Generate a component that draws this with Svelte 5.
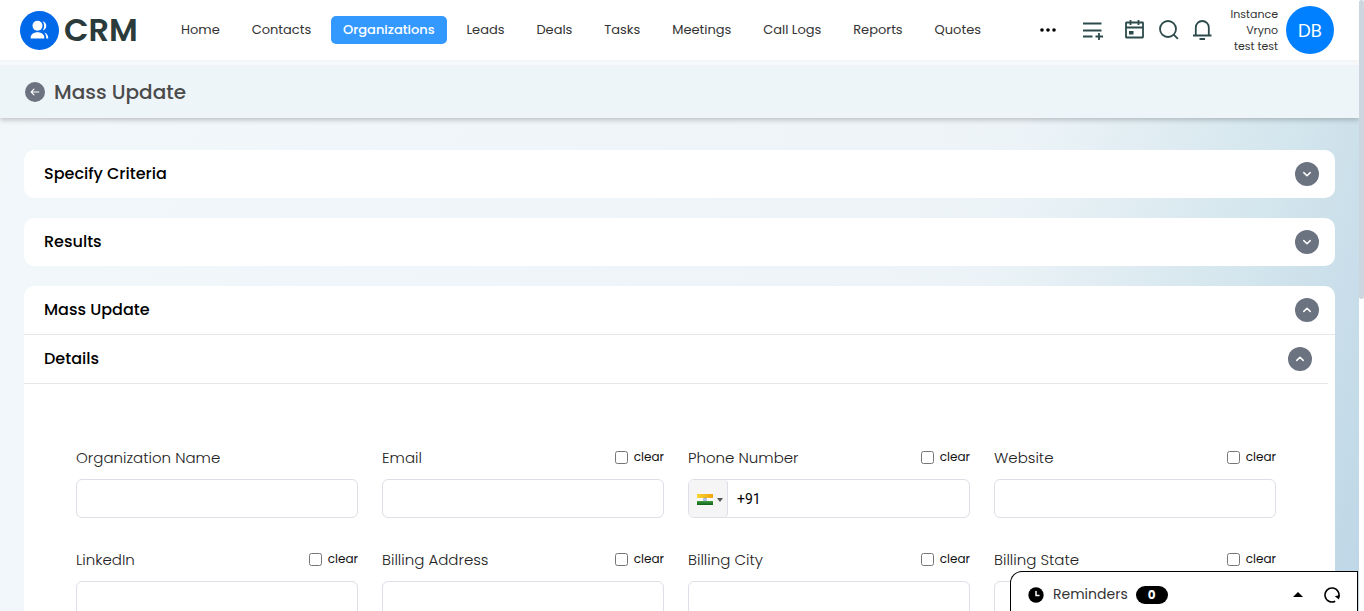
<script>
  const navItems = ['Home', 'Contacts', 'Organizations', 'Leads', 'Deals', 'Tasks', 'Meetings', 'Call Logs', 'Reports', 'Quotes'];
  const fields = [
    { id: 'name', label: 'Organization Name', clear: false },
    { id: 'email', label: 'Email', clear: true },
    { id: 'phone', label: 'Phone Number', clear: true, phone: true },
    { id: 'website', label: 'Website', clear: true },
    { id: 'linkedin', label: 'LinkedIn', clear: true },
    { id: 'billing-address', label: 'Billing Address', clear: true },
    { id: 'billing-city', label: 'Billing City', clear: true },
    { id: 'billing-state', label: 'Billing State', clear: true }
  ];
  let phone = $state('+91');
</script>

{#snippet chevron(up)}
  <svg width="12" height="12" viewBox="0 0 12 12" fill="none" stroke="#fff" stroke-width="1.5" stroke-linecap="round" stroke-linejoin="round" aria-hidden="true">
    {#if up}<path d="M2.8 7.4 6 4.3l3.2 3.1" />{:else}<path d="M2.8 4.6 6 7.7l3.2-3.1" />{/if}
  </svg>
{/snippet}

<div class="shell">
  <div class="page">
    <div class="top">
      <header class="topbar">
        <a class="brand" href="#home">
          <svg width="39" height="39" viewBox="0 0 39 39" aria-hidden="true">
            <circle cx="19.5" cy="19.5" r="19.5" fill="#0069ea" />
            <circle cx="17.5" cy="14.8" r="5" fill="#fff" />
            <path d="M10.7 27.6v-1.4c0-2.8 3-5 6.8-5s6.8 2.2 6.8 5v1.4z" fill="#fff" />
            <path d="M22.8 10.2a4.8 4.8 0 0 1 0 9.2c1.8-2.7 1.8-6.5 0-9.2zM24.3 21.6c2.3.5 3.9 2.8 4 6h-2c0-2.5-.6-4.5-2-6z" fill="#fff" />
          </svg>
          <span>CRM</span>
        </a>
        <nav>
          {#each navItems as item}
            <a href={'#' + item.toLowerCase().replace(' ', '-')} class:active={item === 'Organizations'}>{item}</a>
          {/each}
        </nav>
        <button class="plain more" aria-label="More">
          <svg width="16" height="4" viewBox="0 0 16 4" fill="#000"><circle cx="2" cy="2" r="1.8" /><circle cx="8" cy="2" r="1.8" /><circle cx="14" cy="2" r="1.8" /></svg>
        </button>
        <div class="tools">
          <button class="plain add" aria-label="Quick add">
            <svg width="20" height="20" viewBox="0 0 20 20" fill="none" stroke="#2c4a4a" stroke-width="1.8"><path d="M0 3.5h18.500M0 10.500h18.500M0 16.500h9.500M16 13v7M12.500 16.500h7.500" /></svg>
          </button>
          <button class="plain" aria-label="Calendar">
            <svg width="20" height="20" viewBox="0 0 20 20" fill="none" stroke="#2c4a4a" stroke-width="1.8"><rect x="1" y="2.500" width="17" height="15" rx=".5" /><path d="M1 7.500h17M5.500 0v5M13.500 0v5" /><rect x="4.500" y="11.500" width="3.500" height="2.500" fill="#2c4a4a" stroke-width="1" /></svg>
          </button>
          <button class="plain" aria-label="Search">
            <svg width="20" height="20" viewBox="0 0 20 20" fill="none" stroke="#2c4a4a" stroke-width="1.8"><circle cx="9" cy="9" r="8" /><path d="m14.700 14.700 4.200 4.200" /></svg>
          </button>
          <button class="plain" aria-label="Notifications">
            <svg width="20" height="20" viewBox="0 0 20 20" fill="none" stroke="#2c4a4a" stroke-width="1.8"><path d="M0 15.500h18.500M2.800 15.500V7.500a6.500 6.500 0 0 1 13 0v8M6.500 19h5.500" /></svg>
          </button>
        </div>
        <div class="who"><span>Instance</span><span>Vryno</span><span>test test</span></div>
        <button class="avatar">DB</button>
      </header>

      <div class="titlebar">
        <button class="round small" aria-label="Back">
          <svg width="12" height="12" viewBox="0 0 12 12" fill="none" stroke="#fff" stroke-width="1.1" stroke-linecap="round" stroke-linejoin="round"><path d="M9.800 6H2.300M5 3.200 2.200 6 5 8.800" /></svg>
        </button>
        <h1>Mass Update</h1>
      </div>
    </div>

    <main>
      <section class="card">
        <div class="head"><h2>Specify Criteria</h2><button class="round" aria-label="Expand Specify Criteria">{@render chevron(false)}</button></div>
      </section>
      <section class="card">
        <div class="head"><h2>Results</h2><button class="round" aria-label="Expand Results">{@render chevron(false)}</button></div>
      </section>
      <section class="card">
        <div class="head ruled"><h2>Mass Update</h2><button class="round" aria-label="Collapse Mass Update">{@render chevron(true)}</button></div>
        <div class="details">
          <div class="head ruled"><h2>Details</h2><button class="round" aria-label="Collapse Details">{@render chevron(true)}</button></div>
          <form>
            {#each fields as field}
              <div class="field">
                <div class="caption">
                  <label for={field.id}>{field.label}</label>
                  {#if field.clear}
                    <label class="clear"><input type="checkbox" />clear</label>
                  {/if}
                </div>
                {#if field.phone}
                  <div class="box phone">
                    <button type="button" class="country" aria-label="Country: India">
                      <svg width="16" height="11" viewBox="0 0 16 11" aria-hidden="true">
                        <defs>
                          <linearGradient id="saffron"><stop stop-color="#f7d531" /><stop offset="1" stop-color="#f2a50c" /></linearGradient>
                          <linearGradient id="green" x2="0" y2="1"><stop stop-color="#3f9a3c" /><stop offset="1" stop-color="#10611a" /></linearGradient>
                        </defs>
                        <rect width="16" height="11" fill="#fafafa" />
                        <rect width="16" height="4" fill="url(#saffron)" />
                        <rect y="7" width="16" height="4" fill="url(#green)" />
                        <circle cx="8" cy="5.5" r="1.5" fill="#c5d3eb" stroke="#7d93bd" stroke-width=".8" />
                      </svg>
                      <svg width="6" height="4" viewBox="0 0 6 4" aria-hidden="true"><path d="M0 0h6L3 4z" fill="#555" /></svg>
                    </button>
                    <input id={field.id} type="tel" bind:value={phone} />
                  </div>
                {:else}
                  <input class="box" id={field.id} type="text" />
                {/if}
              </div>
            {/each}
          </form>
        </div>
      </section>
    </main>
  </div>
  <div class="rail" aria-hidden="true"><div class="thumb"></div></div>

  <aside class="reminders">
    <svg width="16" height="16" viewBox="0 0 16 16" aria-hidden="true"><circle cx="8" cy="8" r="7.7" /><path d="M8 4v4.500h3.500" fill="none" stroke="#fff" stroke-width="1.5" /></svg>
    <span>Reminders</span>
    <span class="count">0</span>
    <button class="plain up" aria-label="Open reminders"><svg width="10" height="5" viewBox="0 0 10 5"><path d="M0 5 5 0l5 5z" /></svg></button>
    <button class="plain" aria-label="Refresh reminders">
      <svg width="16" height="16" viewBox="0 0 16 16" fill="none" stroke="#000" stroke-width="1.6"><path d="M11.200 14.200A7 7 0 1 1 14.300 11" /><path d="m10.800 9.300 5-1.200-.8 4.400z" fill="#000" stroke="none" /></svg>
    </button>
  </aside>
</div>

<style>
  :global(body) { margin: 0; }
  .shell, .shell * { box-sizing: border-box; }
  .shell {
    display: flex;
    height: 100vh;
    overflow: hidden;
    font-family: Poppins, Inter, "Open Sans", sans-serif;
    color: #000;
    background: #fff;
  }
  button, input { font: inherit; color: inherit; }
  button { padding: 0; border: 0; cursor: pointer; }
  svg { display: block; flex: none; }
  a { color: inherit; text-decoration: none; }
  h1, h2 { margin: 0; }
  .page {
    flex: 1;
    min-width: 0;
    overflow-y: auto;
    scrollbar-width: none;
    background: linear-gradient(108deg, #f2f7fa 0%, #edf4f8 68%, #d3e5ed 86%, #bdd6e6 100%);
  }
  .rail { flex: none; width: 5px; }
  .thumb { height: 49%; border-radius: 4px; background: #cdd6de; }

  .top { background: #f7f9fb; }
  .topbar {
    display: flex;
    align-items: center;
    height: 60px;
    padding: 0 25px 0 20px;
    background: #fff;
    box-shadow: 0 1px 3px rgba(0, 0, 0, 0.04);
  }
  .brand { display: flex; align-items: center; gap: 5px; width: 149px; font-size: 32px; font-weight: 600; color: #2b3b3b; }
  nav { flex: 1; display: flex; justify-content: space-between; font-size: 13px; line-height: 28px; color: #333; }
  nav a { padding: 0 12px; border-radius: 5px; white-space: nowrap; }
  nav .active { background: #3399ff; color: #fff; font-weight: 500; }
  .plain { background: none; }
  .more { margin: 0 27px 0 47px; }
  .tools { display: flex; gap: 14px; }
  .add { margin-right: 8px; }
  .who { display: flex; flex-direction: column; align-items: flex-end; width: 65px; margin-right: 8px; font-size: 11px; line-height: 16px; color: #333; }
  .avatar { width: 48px; height: 48px; border-radius: 50%; background: #007fff; color: #fff; font-size: 18px; }

  .titlebar {
    display: flex;
    align-items: center;
    gap: 9px;
    height: 53px;
    margin-top: 5px;
    padding: 0 25px;
    background: #eef5f9;
    box-shadow: 0 2px 5px rgba(0, 0, 0, 0.22);
    clip-path: inset(0 0 -8px 0);
  }
  .titlebar h1 { font-size: 20px; font-weight: 500; color: #4b4b4b; }
  .round { display: grid; place-items: center; width: 24px; height: 24px; border-radius: 50%; background: #6b7280; }
  .small { width: 20px; height: 20px; }

  main { display: flex; flex-direction: column; gap: 20px; padding: 32px 24px; }
  .card { border-radius: 10px; background: #fff; }
  .head { display: flex; align-items: center; justify-content: space-between; height: 48px; padding: 0 16px 0 20px; }
  .head h2 { font-size: 16px; font-weight: 500; line-height: 24px; }
  .ruled { height: 49px; border-bottom: 1px solid #e5e7eb; }
  .details { margin-right: 7px; }

  form { display: grid; grid-template-columns: repeat(4, minmax(0, 1fr)); gap: 24px; padding: 62px 52px 40px; }
  .caption { display: flex; justify-content: space-between; height: 33px; font-size: 15px; font-weight: 300; line-height: 24px; color: #222; }
  .clear { display: flex; align-items: center; gap: 6px; height: 22px; font-size: 12px; font-weight: 400; color: #111; }
  .clear input { width: 13px; height: 13px; margin: 0; }
  .field { padding-bottom: 6px; }
  .box { display: block; width: 100%; height: 39px; padding: 0 12px; border: 1px solid #dddfe6; border-radius: 6px; background: #fff; outline: 0; font-size: 14px; }
  .phone { display: flex; padding: 0; overflow: hidden; }
  .country { display: flex; align-items: center; justify-content: center; gap: 4px; width: 39px; padding: 2px 0 0 4px; border-right: 1px solid #dddfe6; border-radius: 0 4px 4px 0; background: #f5f5f5; }
  .phone input { flex: 1; min-width: 0; padding: 0 9px; border: 0; outline: 0; background: none; font-family: Roboto, sans-serif; font-size: 14px; }

  .reminders {
    position: fixed;
    right: 6px;
    bottom: 0;
    display: flex;
    align-items: center;
    width: 348px;
    height: 40px;
    padding: 6px 17px 0 17px;
    border: 1px solid #000;
    border-bottom: 0;
    border-radius: 12px 0 0 0;
    background: #fff;
    font-size: 14px;
    color: #333;
  }
  .reminders > span { margin-left: 9px; }
  .reminders .count { width: 32px; margin-left: 8px; border-radius: 9px; background: #000; color: #fff; font-size: 12px; font-weight: 700; line-height: 18px; text-align: center; }
  .up { margin: 0 21px 0 auto; }
</style>
